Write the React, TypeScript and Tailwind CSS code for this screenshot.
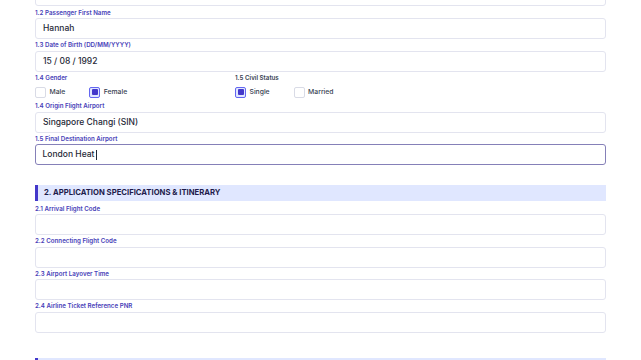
import React from "react";

const font = { fontFamily: "Inter, 'Noto Sans', sans-serif" };

function Label({ children, tone = "indigo" }: { children: React.ReactNode; tone?: "indigo" | "gray" }) {
  return (
    <div
      className={
        "text-[6.2px] leading-[8px] font-semibold mb-[1.5px] " +
        (tone === "indigo" ? "text-[#4841b8]" : "text-[#374151]")
      }
    >
      {children}
    </div>
  );
}

function Field({ label, value, className = "" }: { label: string; value?: string; className?: string }) {
  return (
    <div className={"mt-[2px] " + className}>
      <Label>{label}</Label>
      <div className="h-[21px] rounded-[3px] border border-[#e3e4ef] bg-white px-[7px] flex items-center text-[8.5px] font-medium text-[#1f2937]">
        {value}
      </div>
    </div>
  );
}

function Check({ checked, label }: { checked?: boolean; label: string }) {
  return (
    <div className="flex items-center gap-[3.5px]">
      {checked ? (
        <span className="w-[11px] h-[11px] rounded-[2px] border-[1.5px] border-[#6366f1] bg-[#e0e7ff] flex items-center justify-center">
          <span className="w-[6px] h-[6px] rounded-[1px] bg-[#4338ca]" />
        </span>
      ) : (
        <span className="w-[11px] h-[11px] rounded-[2px] border border-[#d9dbe6] bg-white" />
      )}
      <span className="text-[6.8px] font-medium text-[#374151]">{label}</span>
    </div>
  );
}

function SectionHeader({ title }: { title?: string }) {
  return (
    <div className="h-[16px] border-l-[3px] border-[#4338ca] bg-[#e0e7ff] pl-[6px] flex items-center">
      {title && <span className="text-[7.7px] font-bold text-[#1e1b4b] uppercase">{title}</span>}
    </div>
  );
}

export default function App() {
  return (
    <div className="w-[641px] h-[360px] overflow-hidden bg-white" style={font}>
      <div className="px-[35px]">
        {/* scrolled-off surname field */}
        <div className="-mt-[15px] h-[21px] rounded-[3px] border border-[#e3e4ef] bg-white px-[7px] flex items-center text-[8.5px] font-medium text-[#1f2937]">
          Tay
        </div>

        <Field label="1.2 Passenger First Name" value="Hannah" className="!mt-[2.5px]" />
        <Field label="1.3 Date of Birth (DD/MM/YYYY)" value="15 / 08 / 1992" />

        <div className="mt-[2px] flex">
          <div className="w-[200px]">
            <div className="text-[6.2px] leading-[8px] font-semibold text-[#4841b8] mb-[5px]">1.4 Gender</div>
            <div className="flex gap-[24px]">
              <Check label="Male" />
              <Check checked label="Female" />
            </div>
          </div>
          <div>
            <div className="text-[6.2px] leading-[8px] font-semibold text-[#374151] mb-[5px]">1.5 Civil Status</div>
            <div className="flex gap-[24px]">
              <Check checked label="Single" />
              <Check label="Married" />
            </div>
          </div>
        </div>

        <Field label="1.4 Origin Flight Airport" value="Singapore Changi (SIN)" className="!mt-[4.5px]" />

        <div className="mt-[2px]">
          <Label>1.5 Final Destination Airport</Label>
          <div className="h-[21px] rounded-[3px] border-[1.5px] border-[#8580b8] bg-white px-[6.5px] flex items-center text-[8.5px] font-medium text-[#1f2937]">
            London Heat
            <span className="ml-[1.5px] w-px h-[10px] bg-[#1f2937]" />
          </div>
        </div>

        <div className="mt-[19.5px]">
          <SectionHeader title="2. Application Specifications & Itinerary" />
        </div>

        <div className="pt-[2px]">
          <Field label="2.1 Arrival Flight Code" />
          <Field label="2.2 Connecting Flight Code" />
          <Field label="2.3 Airport Layover Time" />
          <Field label="2.4 Airline Ticket Reference PNR" />
        </div>

        <div className="mt-[25px]">
          <SectionHeader />
        </div>
      </div>
    </div>
  );
}
